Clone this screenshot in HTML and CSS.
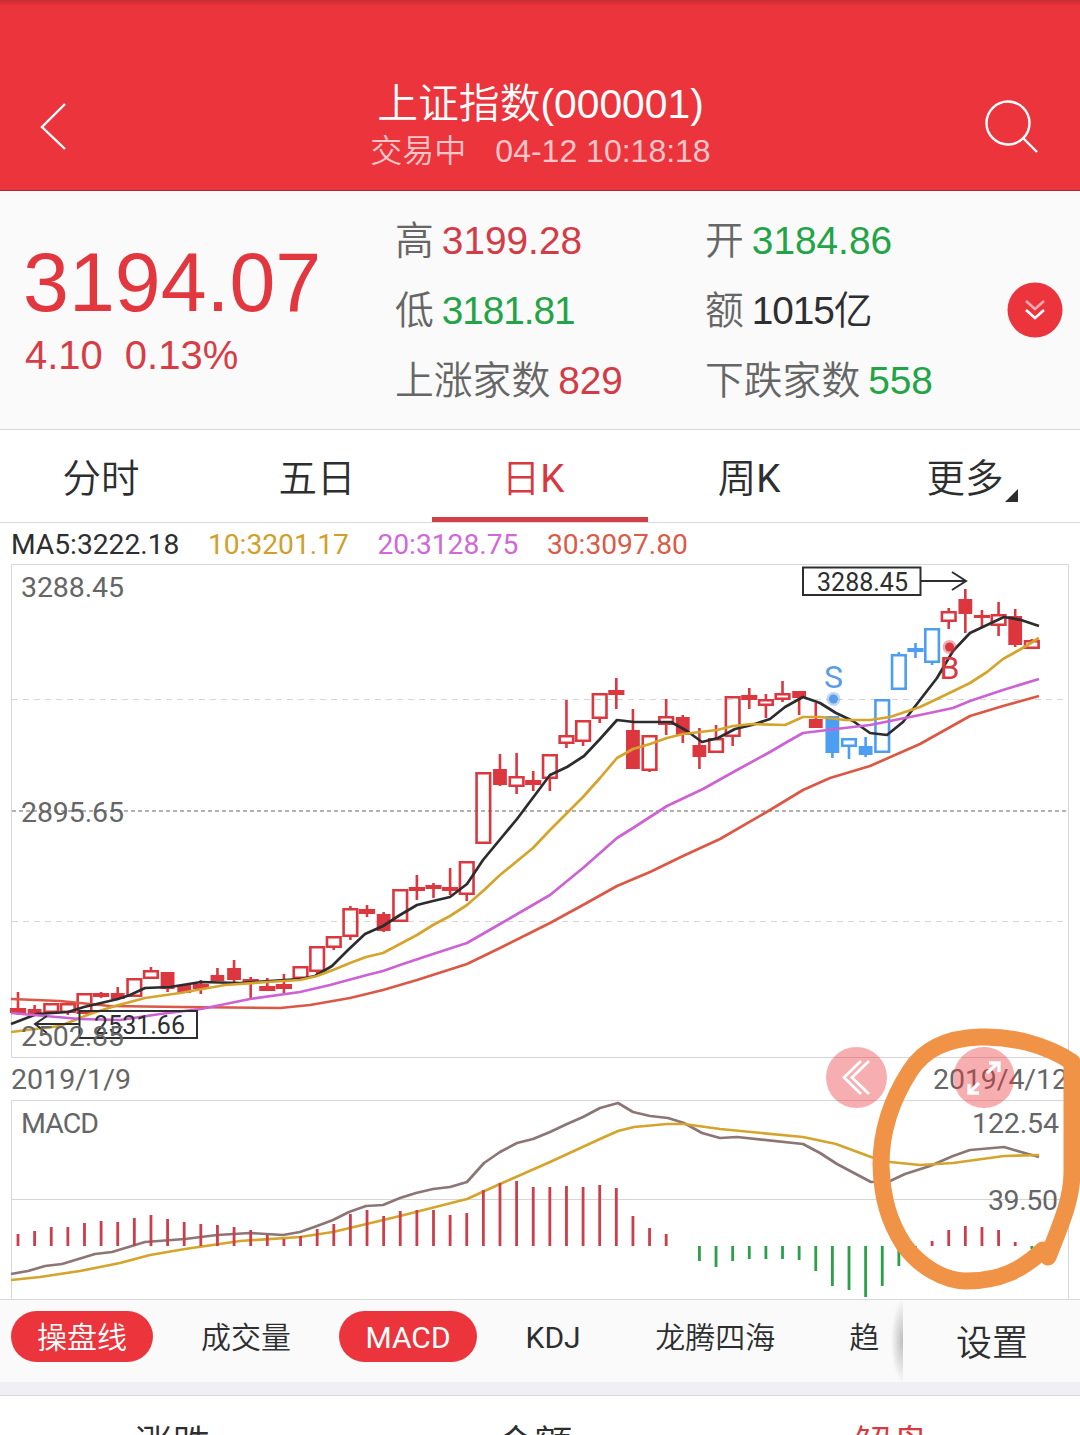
FILE: index.html
```html
<!DOCTYPE html>
<html lang="zh-CN">
<head>
<meta charset="utf-8">
<title>上证指数(000001)</title>
<link rel="stylesheet" href="styles.css">
</head>
<body>
<main class="app">
  <header class="header">
    <svg class="back" viewBox="0 0 30 50"><path d="M26 3 3 26l23 22"/></svg>
    <div class="heading">
      <h1 class="title">上证指数(000001)</h1>
      <p class="status"><span>交易中</span><span>04-12 10:18:18</span></p>
    </div>
    <svg class="search" viewBox="0 0 56 56"><circle cx="24" cy="24" r="21.5"/><path d="m39 39 14 14"/></svg>
  </header>

  <section class="quote">
    <div class="price-block">
      <div class="price">3194.07</div>
      <div class="change"><span>4.10</span><span>0.13%</span></div>
    </div>
    <dl class="stats">
      <div><dt>高</dt><dd class="up">3199.28</dd></div>
      <div><dt>开</dt><dd class="down">3184.86</dd></div>
      <div><dt>低</dt><dd class="down tight">3181.81</dd></div>
      <div><dt>额</dt><dd class="tight">1015亿</dd></div>
      <div><dt>上涨家数</dt><dd class="up">829</dd></div>
      <div><dt>下跌家数</dt><dd class="down">558</dd></div>
    </dl>
    <svg class="expand" viewBox="0 0 56 56"><circle cx="28" cy="28" r="27.5"/><path class="faint" d="m19 19 9 8 9-8"/><path d="m19 28 9 8 9-8"/></svg>
  </section>

  <nav class="tabs">
    <span class="tab">分时</span>
    <span class="tab">五日</span>
    <span class="tab active">日<span class="latin">K</span></span>
    <span class="tab">周<span class="latin">K</span></span>
    <span class="tab more">更多<svg class="corner" viewBox="0 0 14 14"><path d="M14 0v14H0z"/></svg></span>
  </nav>

  <div class="averages">
    <span class="ma5">MA5:3222.18</span>
    <span class="ma10">10:3201.17</span>
    <span class="ma20">20:3128.75</span>
    <span class="ma30">30:3097.80</span>
  </div>

  <svg class="chart" viewBox="0 564 1080 735">
    <g class="frame">
      <path d="M11.500 1300V1100.500H1068.500V1300M11.500 1199.500H1068.500M11.500 564.500H1068.500V1057.500H11.500z"/>
      <path class="dash" d="M12 699.500H1068M12 921.500H1068"/>
      <path class="dash mid" d="M12 811H1068"/>
    </g>
    <g id="candles"></g>
    <g class="line">
      <polyline class="s30" points="11,999 60,1001 110,1006 180,1007 280,1008 310,1005 350,998 383,990 417,980 467,964 500,948 550,923 583,905 617,886 650,872 683,856 720,839 770,810 803,790 830,778 870,766 920,744 970,716 1003,706 1039,696"/>
      <polyline class="s5" points="11,1024 37,1014 68,1012 84,1007 118,999 130,995 145,988 170,987 201,982 240,983 300,979 315,976 332,966 348,950 365,934 383,926 400,915 417,905 433,901 450,897 467,884 483,860 517,819 550,775 567,767 584,756 600,739 617,720 634,722 671,722 687,731 702,742 718,738 735,729 752,725 770,719 785,707 803,697 820,703 836,713 853,721 870,733 887,735 903,722 920,700 937,678 953,651 970,633 987,625 1004,617 1021,620 1039,626"/>
      <polyline class="s10" points="11,1032 60,1026 90,1014 115,1006 145,998 180,993 225,985 267,982 300,980 317,976 333,970 350,963 366,957 383,953 417,935 433,925 450,916 467,905 483,891 500,875 533,848 550,830 567,813 583,797 600,778 617,758 633,749 650,744 667,738 683,734 700,732 717,730 733,726 752,724 785,725 803,717 820,717 845,720 870,720 890,717 920,707 937,699 970,683 987,672 1003,659 1021,649 1039,638"/>
      <polyline class="s20" points="11,1013 45,1016 80,1019 120,1020 160,1014 201,1009 250,999 300,992 330,985 367,975 383,971 400,965 433,954 467,943 500,924 550,895 583,868 600,853 617,838 633,828 667,806 703,789 737,770 770,752 787,742 803,733 836,729 870,725 920,715 953,708 970,701 1003,690 1039,679"/>
      <polyline class="dif" points="11,1274 28,1271 45,1266 62,1264 95,1254 112,1252 145,1242 185,1239 217,1235 250,1233 283,1235 300,1232 317,1226 333,1220 349,1212 366,1206 383,1205 400,1198 416,1193 433,1189 450,1187 467,1182 484,1163 500,1152 517,1143 533,1139 550,1132 567,1124 583,1117 600,1108 618,1103 633,1112 650,1116 668,1118 684,1123 702,1133 720,1138 737,1137 803,1144 820,1153 837,1164 854,1173 871,1182 890,1181 905,1174 930,1166 953,1156 970,1150 1004,1147 1021,1152 1039,1157"/>
      <polyline class="s10" points="11,1280 40,1277 80,1271 120,1263 150,1255 185,1249 240,1241 300,1237 333,1232 400,1216 467,1199 500,1184 550,1162 600,1139 618,1131 634,1127 667,1124 684,1124 720,1129 803,1137 836,1144 871,1157 890,1162 920,1165 953,1163 1004,1156 1039,1155"/>
    </g>
    <g id="bars"></g>
    <g class="callout">
      <path d="M803 567.500H920.500V595H803zM920.500 581H965M952 572l14 9-14 9M79.500 1011H197V1038H79.500zM79.500 1024H35M47 1016l-12 8 12 9"/>
      <text x="817" y="591" textLength="91">3288.45</text>
      <text x="94" y="1034" textLength="91">2531.66</text>
    </g>
    <g class="marks">
      <circle class="sell halo" cx="833.500" cy="699" r="7"/><circle class="sell" cx="833.500" cy="699" r="4.500"/>
      <text class="sell" x="833.500" y="688">S</text>
      <circle class="buy halo" cx="949.500" cy="647" r="7"/><circle class="buy" cx="949.500" cy="647" r="4.500"/>
      <text class="buy" x="949.500" y="679">B</text>
    </g>
    <g class="label">
      <text x="21" y="597" textLength="103">3288.45</text>
      <text x="21" y="822" textLength="103">2895.65</text>
      <text x="21" y="1046" textLength="103">2502.85</text>
      <text x="11" y="1089" textLength="120">2019/1/9</text>
      <text x="933" y="1089" textLength="135">2019/4/12</text>
      <text x="21" y="1133" textLength="78">MACD</text>
      <text x="972" y="1133" textLength="87">122.54</text>
      <text x="988" y="1210" textLength="70">39.50</text>
    </g>
    <g class="float">
      <circle cx="856.500" cy="1077.500" r="30.500"/>
      <circle cx="984" cy="1077.500" r="30.500"/>
      <path d="m861 1061-17 16.500 17 16.500M869 1061l-17 16.500 17 16.500"/>
      <path class="thick" d="m987 1073 11-10M989 1063h10v9M979 1083l-9 9M969 1084v9h10"/>
    </g>
    <path class="marker" d="M1048 1257C1060 1226 1072 1200 1072 1172V1062C1045 1044 1010 1036 980 1037C948 1038 924 1049 910 1071C890 1102 881 1132 881 1165C882 1198 889 1222 904 1245C920 1267 945 1281 966 1281C1000 1281 1022 1270 1043 1250"/>
  </svg>

  <div class="indicators">
    <div class="chips">
      <span class="chip on">操盘线</span><span class="chip">成交量</span><span class="chip on latin">MACD</span><span class="chip latin">KDJ</span><span class="chip">龙腾四海</span><span class="chip">趋</span>
    </div>
    <div class="settings">设置</div>
  </div>
  <div class="spacer"></div>
  <nav class="bottom">
    <span>涨跌</span><span>金额</span><span class="current">解盘</span>
  </nav>
</main>
<script src="chart.js"></script>
</body>
</html>
```
FILE: styles.css
```css
* { box-sizing: border-box; }
body { margin: 0; background: #fff; color: #2d2e30; font-family: "Liberation Sans", "Noto Sans CJK SC", sans-serif; font-weight: 350; }
h1, p, dl, dd { margin: 0; font-weight: 350; }
svg { display: block; }
.latin { font-weight: 400; }
.app { width: 1080px; height: 1435px; overflow: hidden; display: flex; flex-direction: column; }
.app > * { flex-shrink: 0; }

.header { height: 191px; padding: 81px 40px 0 39px; display: flex; justify-content: space-between; align-items: flex-start; background: linear-gradient(#c92c33, #eb343c 6px); border-bottom: 1px solid #a52b32; color: #fff; }
.back { width: 30px; height: 50px; margin-top: 20px; }
.search { width: 56px; height: 56px; margin-top: 18px; }
.back path, .search { fill: none; stroke: #fff; stroke-width: 2.4; }
.heading { text-align: center; padding-left: 28px; }
.title { font-size: 40.800px; line-height: 47px; }
.status { display: flex; justify-content: center; gap: 29px; font-size: 32px; line-height: 47px; color: #ffc6ca; }

.quote { height: 239px; display: flex; background: #fafafa; border-bottom: 1px solid #d9d9d9; }
.price-block { width: 395px; padding: 44px 0 0 23px; color: #e2373f; }
.price { font-size: 82.500px; line-height: 95px; }
.change { display: flex; gap: 22px; padding-left: 2px; font-size: 40px; line-height: 50px; color: #d63d46; }
.stats { width: 612px; padding-top: 15px; display: grid; grid-template-columns: 310px 302px; grid-auto-rows: 70px; font-size: 38.800px; line-height: 70px; }
.stats div { display: flex; gap: 8px; }
.stats dt { color: #666; }
.tight { letter-spacing: -1.1px; }
.up { color: #d33c46; }
.down { color: #22a447; }
.expand { width: 56px; height: 56px; margin-top: 91px; }
.expand circle { fill: #eb343c; }
.expand path { fill: none; stroke: #fff; stroke-width: 2.6; }
.expand .faint { stroke: #f7a9ad; }

.tabs { height: 93px; display: grid; grid-template-columns: repeat(5, 216px); border-bottom: 1px solid #d9d9d9; font: 350 38.500px/97px Roboto, "Noto Sans CJK SC", sans-serif; text-align: center; }
.tab { height: 92px; padding-right: 14px; }
.active { color: #d8383f; border-bottom: 5px solid #d33f47; }
.more { display: flex; justify-content: center; align-items: flex-start; padding: 0; }
.corner { width: 13px; height: 13px; margin: 59px 0 0 1px; fill: #2d2e30; }

.averages { height: 41px; padding-left: 11px; display: flex; gap: 28.500px; font: 28.200px/43px Roboto, sans-serif; white-space: nowrap; }
.ma10 { color: #d1a02b; }
.ma20 { color: #cf69d6; }
.ma30 { color: #d85c48; }

.chart { width: 1080px; height: 736px; font-family: Roboto, sans-serif; font-weight: 400; border-bottom: 1px solid #d9d9d9; }
.frame path { fill: none; stroke: #d6d6d6; }
.frame .dash { stroke-dasharray: 6 5; }
.frame .mid { stroke: #999; stroke-width: 1.5; stroke-dasharray: 4 3; }
.line polyline { fill: none; stroke-width: 2.7; stroke-linejoin: round; }
.line .s5 { stroke: #2c2c2e; }
.line .s10 { stroke: #d5a42c; }
.line .s20 { stroke: #cc62d4; }
.line .s30 { stroke: #db5845; }
.line .dif { stroke: #8b7675; }
.candle { stroke: currentColor; stroke-width: 2.6; }
.hollow { fill: none; }
.solid { fill: currentColor; }
.red { color: #dc363f; }
.blue { color: #4c9ef3; }
.bar-up { fill: #cc3e4a; }
.bar-down { fill: #2ba04b; }
.callout path { fill: none; stroke: #2d2e30; stroke-width: 2; }
.callout text { font-size: 25px; fill: #2d2e30; }
.marks text { font-size: 32px; text-anchor: middle; }
.sell { fill: #5b9be8; }
.buy { fill: #d93742; }
.halo { opacity: .4; }
.label text { font-size: 28.500px; fill: #666; }
.float circle { fill: #eb343c; opacity: .4; }
.float path { fill: none; stroke: #fff; stroke-width: 2.8; }
.float .thick { stroke-width: 3.3; }
.marker { fill: none; stroke: #f19347; stroke-width: 17; stroke-linecap: round; stroke-linejoin: round; }

.indicators { height: 82px; display: flex; background: #fafafa; font-family: Roboto, "Noto Sans CJK SC", sans-serif; }
.chips { width: 903px; padding: 11px 26px 0 11px; display: flex; gap: 22px; align-items: flex-start; overflow: hidden; background: radial-gradient(ellipse 12px 42px at 100% 50%, #bdbdbd, #fafafa); }
.chip { flex: none; height: 51px; padding: 0 26px; border-radius: 26px; font-size: 30px; line-height: 54px; white-space: nowrap; }
.chip.latin { padding: 0 26.500px; }
.on { background: #eb343c; color: #fff; }
.settings { width: 177px; padding-left: 1px; font-size: 36px; line-height: 88px; text-align: center; }
.spacer { height: 14px; background: #efeff4; border-bottom: 1px solid #d9d9d9; }
.bottom { height: 39px; padding-top: 17px; display: grid; grid-template-columns: 345px 379px 334px; overflow: hidden; font: 350 38px/56px "Noto Sans CJK SC", sans-serif; text-align: center; }
.current { color: #d8383f; }
```
FILE: chart.js
```js
const STEP = 16.62, START = 18;
const NS = 'http://www.w3.org/2000/svg';

// Each candle: wick top, body top, body bottom, wick bottom, filled
const candles = [
  [992,1008,1013,1015,0],[1005,1009,1015,1015,1],[1003,1003,1013,1013,0],[1001,1003,1013,1015,0],
  [993,993,1014,1014,0],[992,993,997,998,1],[987,993,999,999,1],[978,978,997,997,0],
  [967,970,979,979,0],[972,972,989,992,1],[985,985,993,993,1],[980,984,989,994,0],
  [968,975,981,981,1],[960,968,980,983,1],[977,979,982,1000,1],[978,986,991,991,1],
  [974,984,989,993,1],[966,966,979,979,0],[946,946,972,975,0],[936,936,948,950,0],
  [906,908,937,940,0],[905,909,914,917,1],[912,914,931,932,1],[889,889,922,922,0],
  [875,887,891,900,1],[883,885,889,898,1],[868,887,891,895,1],[861,861,895,901,0],
  [772,772,844,844,0],[754,769,785,786,1],[753,776,787,794,0],[771,780,785,791,1],
  [754,754,779,791,0],[700,735,744,748,0],[720,720,742,746,0],[693,693,719,723,0],
  [678,690,695,709,1],[709,730,769,769,1],[735,735,771,772,0],[699,716,725,735,0],
  [715,717,735,743,1],[728,745,757,769,1],[725,738,753,753,0],[696,696,737,746,0],
  [688,695,700,709,1],[694,699,706,718,0],[681,693,700,702,0],[691,691,698,715,1],
  [703,719,728,728,1],[716,716,753,758,1],[738,738,747,759,0],[737,746,755,757,1],
  [699,699,753,753,0],[652,654,690,690,0],[643,648,652,658,1],[628,628,663,665,0],
  [608,611,622,629,0],[589,599,614,633,1],[610,615,618,628,1],[602,614,626,636,0],
  [609,616,645,647,1],[639,640,649,649,0]
];

// Far end of each histogram bar, measured from the zero line
const ZERO = 1246;
const bars = [
  1234,1231,1227,1227,1223,1221,1222,1218,1215,1219,1222,1224,1225,1227,1230,1235,1239,1236,1229,1224,1214,
  1210,1216,1211,1210,1210,1215,1213,1190,1183,1181,1187,1187,1186,1187,1185,1188,1216,1228,1234,1246,1261,
  1267,1261,1259,1259,1259,1260,1271,1286,1290,1297,1286,1266,1249,1241,1230,1226,1227,1230,1242,1249
];

function add(parent, name, attrs) {
  const el = document.createElementNS(NS, name);
  for (const key in attrs) el.setAttribute(key, attrs[key]);
  document.getElementById(parent).appendChild(el);
}

candles.forEach(([high, top, bottom, low, filled], i) => {
  const x = START + i * STEP;
  const t = top + 1.3, b = Math.max(bottom - 1.3, t + 0.1);
  const half = filled && bottom - top > 5 ? 5.6 : 6.8;
  const blue = i >= 49 && i <= 55;
  add('candles', 'path', {
    class: `candle ${filled ? 'solid' : 'hollow'} ${blue ? 'blue' : 'red'}`,
    d: `M${x} ${high}V${t}M${x} ${b}V${low}M${x - half} ${t}H${x + half}V${b}H${x - half}z`
  });
});

bars.forEach((end, i) => {
  add('bars', 'rect', {
    class: end < ZERO ? 'bar-up' : 'bar-down',
    x: START + i * STEP - 1.4, y: Math.min(end, ZERO), width: 2.8, height: Math.abs(end - ZERO)
  });
});
```
